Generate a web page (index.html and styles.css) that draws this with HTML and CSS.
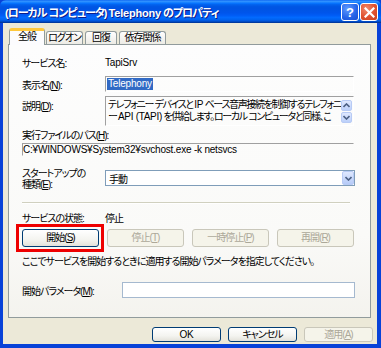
FILE: index.html
```html
<!DOCTYPE html>
<html lang="ja">
<head>
<meta charset="utf-8">
<link rel="stylesheet" href="styles.css">
</head>
<body>
<div class="window">
  <div class="titlebar">
    <span class="title">(ローカル コンピュータ) <span class="en">Telephony</span> のプロパティ</span>
    <div class="tb-buttons">
      <div class="tb-btn help">?</div>
      <div class="tb-btn close">
        <svg width="11" height="11" viewBox="0 0 11 11"><path d="M1.5 1.5 L9.5 9.5 M9.5 1.5 L1.5 9.5" stroke="#fff" stroke-width="2.2" stroke-linecap="square"/></svg>
      </div>
    </div>
  </div>
  <div class="client">
    <div class="tabs">
      <div class="tab active">全般</div>
      <div class="tab">ログオン</div>
      <div class="tab">回復</div>
      <div class="tab">依存関係</div>
    </div>
    <div class="panel">
      <div class="row r-name">
        <span class="label">サービス名:</span>
        <span class="value en">TapiSrv</span>
      </div>
      <div class="row r-display">
        <span class="label">表示名(<u>N</u>):</span>
        <div class="field edit"><span class="sel en">Telephony</span></div>
      </div>
      <div class="row r-desc">
        <span class="label">説明(<u>D</u>):</span>
        <div class="field memo">
          <div class="memo-text">テレフォニー デバイスと <span class="en">IP</span> ベース音声接続を制御するテレフォニ<br>ー <span class="en">API (TAPI)</span> を供給します。ローカル コンピュータと同様、こ</div>
          <div class="scroll">
            <div class="sbtn"><svg width="7" height="5" viewBox="0 0 7 5"><path d="M0.5 4 L3.5 1 L6.5 4" fill="none" stroke="#4d6185" stroke-width="1.6"/></svg></div>
            <div class="sbtn"><svg width="7" height="5" viewBox="0 0 7 5"><path d="M0.5 1 L3.5 4 L6.5 1" fill="none" stroke="#4d6185" stroke-width="1.6"/></svg></div>
          </div>
        </div>
      </div>
      <div class="row r-pathlabel">
        <span>実行ファイルのパス(<u>H</u>):</span>
      </div>
      <div class="row r-path">
        <div class="field path en">C:¥WINDOWS¥System32¥svchost.exe -k netsvcs</div>
      </div>
      <div class="row r-startup">
        <span class="label two">スタートアップの<br>種類(<u>E</u>):</span>
        <div class="select">
          <span>手動</span>
          <div class="drop"><svg width="7" height="5" viewBox="0 0 7 5"><path d="M0.5 1 L3.5 4 L6.5 1" fill="none" stroke="#4d6185" stroke-width="1.6"/></svg></div>
        </div>
      </div>
      <div class="sep"></div>
      <div class="row r-state">
        <span class="label">サービスの状態:</span>
        <span class="value">停止</span>
      </div>
      <div class="row r-buttons">
        <div class="btn highlight">開始(<u>S</u>)</div>
        <div class="btn disabled">停止(<u>T</u>)</div>
        <div class="btn disabled">一時停止(<u>P</u>)</div>
        <div class="btn disabled">再開(<u>R</u>)</div>
      </div>
      <div class="row r-help">
        <span>ここでサービスを開始するときに適用する開始パラメータを指定してください。</span>
      </div>
      <div class="row r-param">
        <span class="label wide">開始パラメータ(<u>M</u>):</span>
        <div class="field input"></div>
      </div>
    </div>
    <div class="footer">
      <div class="btn fbtn en">OK</div>
      <div class="btn fbtn">キャンセル</div>
      <div class="btn fbtn disabled">適用(<u>A</u>)</div>
    </div>
  </div>
</div>
</body>
</html>
```
FILE: styles.css
```css
* { box-sizing: border-box; }
html, body { margin: 0; padding: 0; }
body {
  width: 381px;
  height: 348px;
  overflow: hidden;
  font-family: "Liberation Sans", "Noto Sans CJK JP", sans-serif;
  font-size: 10px;
  font-feature-settings: "palt";
  letter-spacing: -1px;
  color: #000;
}
.en { letter-spacing: -0.2px; }
u { text-decoration: underline; text-underline-offset: 1px; }

.window {
  width: 381px;
  height: 348px;
  display: flex;
  flex-direction: column;
  background: #0842d8;
}
.titlebar {
  height: 23px;
  flex: none;
  display: flex;
  align-items: center;
  justify-content: space-between;
  padding: 0 3px 0 5px;
  background: linear-gradient(to bottom, #0058ee 0%, #3593ff 4%, #288eff 8%, #127dff 12%, #036ffc 16%, #0262ee 20%, #0057e5 28%, #0054e3 36%, #0055eb 56%, #005bf5 66%, #026afe 76%, #0062ef 86%, #0052d6 92%, #0040ab 96%, #003092 100%);
  border-radius: 6px 6px 0 0;
}
.title {
  color: #fff;
  font-weight: bold;
  font-size: 11px;
  text-shadow: 1px 1px 0 #0a1e8c;
  white-space: nowrap;
}
.tb-buttons { display: flex; gap: 1px; margin-top: 1px; }
.tb-btn {
  width: 18px;
  height: 18px;
  border: 1px solid #fff;
  border-radius: 3px;
  display: flex;
  align-items: center;
  justify-content: center;
  color: #fff;
  font-weight: bold;
  font-size: 13px;
  letter-spacing: 0;
  font-family: "Liberation Sans", sans-serif;
}
.help { background: radial-gradient(circle at 35% 30%, #5f9bff 0%, #2463e8 60%, #1b4fd0 100%); }
.close { background: radial-gradient(circle at 35% 30%, #f08a6e 0%, #e0512f 55%, #c4401f 100%); }

.client {
  flex: 1;
  margin: 0 4px 4px 3px;
  background: #ece9d8;
  padding: 5px 6px 0 5px;
  display: flex;
  flex-direction: column;
}

.tabs {
  display: flex;
  align-items: flex-end;
  height: 16px;
  padding-left: 1px;
  position: relative;
  z-index: 1;
}
.tab {
  height: 13px;
  margin-right: 1px;
  padding: 0;
  white-space: nowrap;
  border: 1px solid #919b9c;
  border-bottom: none;
  border-radius: 3px 3px 0 0;
  background: linear-gradient(#fefefe, #ecebe5);
  display: flex;
  align-items: center;
  justify-content: center;
  line-height: 1;
}
.tab:nth-child(2) { width: 37px; }
.tab:nth-child(3) { width: 32px; margin-left: 1px; }
.tab:nth-child(4) { width: 47px; margin-left: 1px; }
.tab.active {
  width: 36px;
  height: 17px;
  margin-bottom: -1px;
  background: #fcfcfe;
  border-top: 3px solid #ffc83c;
  padding-bottom: 2px;
}

.panel {
  height: 274px;
  border: 1px solid #919b9c;
  background: linear-gradient(#fdfdfd 0%, #fafaf8 70%, #f4f3ee 100%);
  padding: 0 0 0 13px;
  display: flex;
  flex-direction: column;
}
.row { display: flex; align-items: center; white-space: nowrap; }
.label { width: 83px; flex: none; }
.label.wide { width: 100px; }

.r-name { margin-top: 10px; height: 14px; }
.r-display { margin-top: 7px; height: 16px; }
.r-desc { margin-top: 4px; height: 30px; align-items: flex-start; }
.r-desc .label { padding-top: 2px; }
.r-pathlabel { margin-top: 2px; height: 12px; }
.r-path { margin-top: 3px; height: 13px; }
.r-startup { margin-top: 11px; height: 22px; }
.r-state { margin-top: 6px; height: 14px; }
.r-buttons { margin-top: 5px; height: 18px; gap: 8px; }
.r-help { margin-top: 6px; height: 14px; }
.r-param { margin-top: 15px; height: 16px; }

.label.two { line-height: 11px; padding-top: 1px; }

.field {
  border: 1px solid;
  border-color: #a0a0a0 #fff #fff #a0a0a0;
}
.edit { width: 249px; height: 16px; padding: 1px 1px; display: flex; align-items: center; }
.sel { background: #316ac5; color: #fff; padding: 0 1px; line-height: 12px; }
.memo { width: 249px; height: 30px; display: flex; }
.memo-text {
  flex: 1;
  white-space: nowrap;
  line-height: 12px;
  padding: 2px 1px 0 2px;
  overflow: hidden;
  letter-spacing: -1.35px;
}
.memo-text .en { letter-spacing: -0.3px; }
.scroll { width: 11px; display: flex; flex-direction: column; gap: 1px; padding-top: 3px; margin-right: 1px; }
.sbtn {
  height: 11px;
  border: 1px solid #b8cbf5;
  border-radius: 2px;
  background: linear-gradient(#dfe8fe, #bcd0fa);
  display: flex;
  align-items: center;
  justify-content: center;
}
.path { width: 332px; height: 13px; line-height: 11px; padding: 0; border-right-color: transparent; border-bottom-color: transparent; }

.select {
  width: 250px;
  height: 16px;
  border: 1px solid #7f9db9;
  background: #fff;
  display: flex;
  align-items: center;
  justify-content: space-between;
  padding-left: 3px;
}
.drop {
  width: 12px;
  height: 14px;
  border: 1px solid #b8cbf5;
  border-radius: 2px;
  background: linear-gradient(#dfe8fe, #b6cbf8);
  display: flex;
  align-items: center;
  justify-content: center;
}
.sep {
  margin-top: 13px;
  width: 328px;
  height: 2px;
  border-top: 1px solid #d0d0bf;
  border-bottom: 1px solid #fff;
}

.btn {
  width: 77px;
  height: 18px;
  border: 1px solid #003c74;
  border-radius: 3px;
  background: linear-gradient(#ffffff 0%, #f4f4f0 60%, #e3e2da 100%);
  display: flex;
  align-items: center;
  justify-content: center;
  line-height: 1;
  flex: none;
}
.btn.disabled {
  border-color: #c9c7ba;
  color: #aca899;
  background: #f5f4ea;
}
.btn.highlight { position: relative; }
.btn.highlight::after {
  content: "";
  position: absolute;
  top: -6px;
  bottom: -6px;
  left: -7px;
  right: -6px;
  border: 3px solid #ee0000;
}
.input { width: 233px; height: 16px; border: 1px solid #a5b9cf; background: #fff; }

.footer {
  display: flex;
  justify-content: flex-end;
  gap: 7px;
  margin-top: 9px;
  margin-right: -2px;
}
.fbtn { width: 69px; height: 15px; }
```
